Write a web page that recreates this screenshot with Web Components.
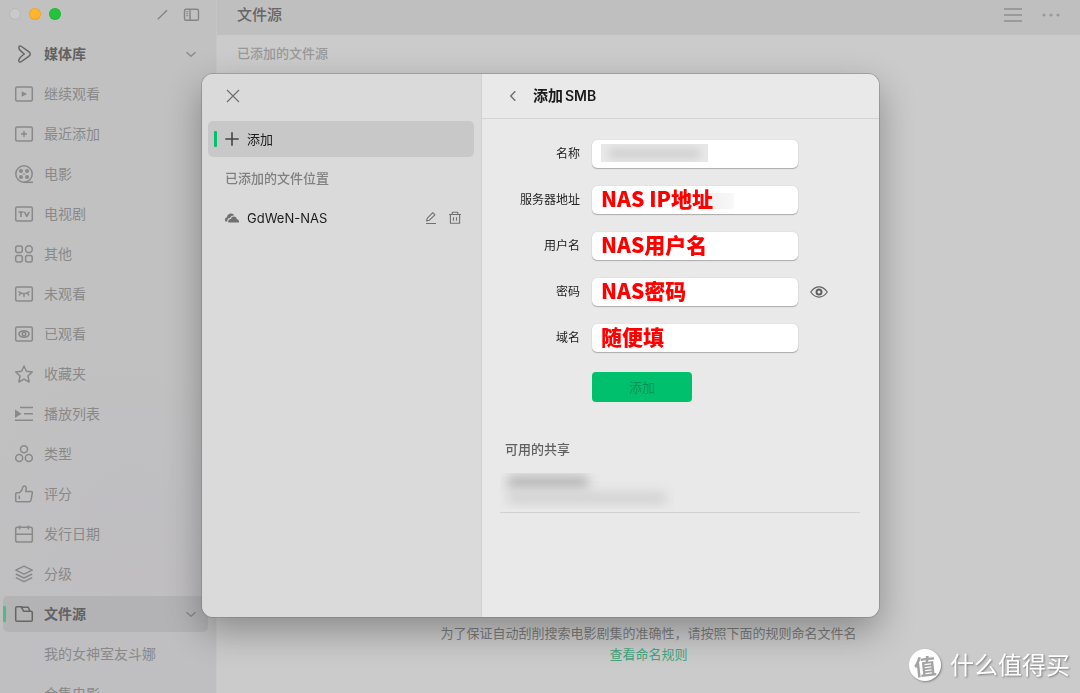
<!DOCTYPE html>
<html lang="zh-CN">
<head>
<meta charset="utf-8">
<title>文件源</title>
<style>
  html, body { margin: 0; height: 100%; }
  body { overflow: hidden; font-family: Inter, "Noto Sans CJK SC", sans-serif; font-size: 13px; color: #8d8d8d; background: #cbcbcb; }
</style>
</head>
<body>
<media-app></media-app>
<script>
const ICONS = {
  library: '<path d="M4.300 1.200Q5.200.5 6.500 1.500L14 6.800Q16.500 9 14 11.200L6.500 16.500Q5.200 17.500 4.300 16.800 3.500 16 4 14.500 4.600 12.600 9.300 9 4.600 5.400 4 3.500 3.500 2 4.300 1.200Z"/>',
  play: '<rect x=".7" y="2" width="16.600" height="14" rx="1.500"/><path d="M6.700 6.200v5.600L12 9z" fill="currentColor" stroke="none"/>',
  plusbox: '<rect x=".7" y="2" width="16.600" height="14" rx="1.500"/><path d="M9 6v6M6 9h6"/>',
  film: '<circle cx="9" cy="9" r="8.200"/><path d="M9 17.300h9"/><g fill="currentColor" stroke="none"><circle cx="6" cy="6" r="2"/><circle cx="12" cy="6" r="2"/><circle cx="6" cy="12" r="2"/><circle cx="12" cy="12" r="2"/><circle cx="9" cy="9" r=".8"/></g>',
  tv: '<rect x=".7" y="2" width="16.600" height="14" rx="1.500"/><path d="M3.500 7h5M6 7v5M9.500 6.800 11.800 11.500 14.200 6.800" stroke-width="1.600"/>',
  other: '<rect x=".7" y=".9" width="6.600" height="6.600" rx="2"/><circle cx="13.900" cy="4.200" r="3.400"/><rect x=".7" y="10.500" width="6.600" height="6.600" rx="2"/><rect x="10.600" y="10.500" width="6.600" height="6.600" rx="2"/>',
  closedeye: '<rect x=".7" y="2" width="16.600" height="14" rx="1.500"/><path d="M3.500 6.500Q9 11 14.500 6.500M9 9v3M5.500 8.200 4.200 10.500M12.500 8.200l1.300 2.300"/>',
  openeye: '<rect x=".7" y="2" width="16.600" height="14" rx="1.500"/><ellipse cx="9" cy="9" rx="5" ry="3.200" stroke-width="1.700"/><circle cx="9" cy="9" r="1.800"/>',
  star: '<path d="M9 1 11.400 6.200 17.300 6.900 13 11 14.100 17 9 14.100 3.900 17 5 11 .7 6.900 6.600 6.200z"/>',
  list: '<path d="M5 2.500h13M9 8.800h9M0 15.200h18"/><path d="M0 4.500v8.400L6.500 8.800z" fill="currentColor" stroke="none"/>',
  types: '<circle cx="9" cy="4.300" r="3.500"/><circle cx="4.200" cy="13" r="3.500"/><circle cx="13.800" cy="13" r="3.500"/>',
  thumb: '<path d="M.7 9Q.7 7.700 2 7.700H4.500Q7 6 7.700 2.500 8.200.8 9.700 1 11.300 1.300 11.200 3.300L10.800 6.500H16Q17.600 6.700 17.300 8.200L16 15Q15.600 16.800 14 16.800H2Q.7 16.800.7 15.500zM4.300 10.500v3.500"/>',
  calendar: '<rect x=".7" y="2.200" width="16.600" height="14.800" rx="1.800"/><path d="M.7 9.300h16.600M4.700.4v4M13.300.4v4"/>',
  layers: '<path d="M9 1.200 17.200 5.200 9 9.200.8 5.200zM.8 9 9 13l8.200-4M.8 12.700 9 16.700l8.200-4"/>',
  folder: '<path d="M.7 3Q.7 1.800 2 1.800H6.200L8 2.300H13.200L15 6.300H16Q17.300 6.300 17.300 7.500V15Q17.300 16.300 16 16.300H2Q.7 16.300.7 15zM6.200 1.800 8.700 6.300H15"/>',
  chevron: '<path d="M4.500 7.300 9 11.300l4.500-4" stroke-width="1.500"/>',
  wand: '<path d="M4.800 14.300 14 5.300M12.300 7l1.700-1.700" stroke-width="1.400"/>',
  panel: '<rect x="2.500" y="4.200" width="14" height="11" rx="1.500"/><path d="M8 4.500v10.500"/><path d="M4.300 6.700h2M4.300 8.700h2M4.300 10.700h2" stroke-width="1"/>',
  menu: '<path d="M0 3h18M0 9h18M0 15h18" stroke-width="2"/>',
  more: '<g fill="currentColor" stroke="none"><circle cx="2" cy="9" r="1.600"/><circle cx="9" cy="9" r="1.600"/><circle cx="16" cy="9" r="1.600"/></g>',
  close: '<path d="M3 3l12 12M15 3 3 15"/>',
  plus: '<path d="M9 2.300v13.400M2.300 9h13.400" stroke-width="1.600"/>',
  cloud: '<g fill="currentColor" stroke="none"><path d="M2.300 12.400Q1 9.200 4 8.300 4.300 5 7.500 4.600 10.300 4.300 11.300 6.600 8 6.300 7 9 4.300 9 4.200 12.400z"/><path d="M5.300 13.500Q4.700 10.300 7.900 10 8.500 7.300 11.300 7.600 13.700 8 13.900 10.200 16.300 10.400 16 13.500z"/></g>',
  edit: '<path d="M4 14.500h10M4.600 11.900 5.200 9.400 10.800 3.700 12.900 5.800 7.200 11.300z" stroke-width="1.100"/>',
  trash: '<path d="M3 5.500h12M6.200 5.500V3.200h5.600v2.300M4.400 5.500v8.800h9.200V5.500M7.500 8.300v3.500M10.500 8.300v3.500" stroke-width="1.100"/>',
  back: '<path d="M11.300 4.300 6.700 9l4.600 4.700" stroke-width="1.500"/>',
  eye: '<path d="M.7 9Q4.500 3.900 9 3.900T17.300 9Q13.500 14.100 9 14.100T.7 9z"/><circle cx="9" cy="9" r="2.500" stroke-width="2"/>'
};

const define = (tag, markup) => customElements.define(tag, class extends HTMLElement {
  constructor() {
    super();
    this.attachShadow({ mode: 'open' });
  }
  connectedCallback() {
    const template = document.createElement('template');
    template.innerHTML = typeof markup === 'function' ? markup(this) : markup;
    this.shadowRoot.replaceChildren(template.content.cloneNode(true));
  }
});

define('ui-icon', el => `
  <style>
    :host { display: block; flex: none; width: 18px; height: 18px; }
    svg { display: block; overflow: visible; stroke-width: var(--icon-stroke, 1.200); }
  </style>
  <svg width="18" height="18" viewBox="0 0 18 18" fill="none" stroke="currentColor" stroke-linejoin="round" aria-hidden="true">${ICONS[el.getAttribute('name')]}</svg>`);

define('icon-button', el => `
  <style>
    :host { display: block; flex: none; }
    button { display: block; margin: 0; padding: 0; border: 0; background: none; color: inherit; }
  </style>
  <button type="button" aria-label="${el.getAttribute('label')}"><ui-icon name="${el.getAttribute('icon')}"></ui-icon></button>`);

define('nav-item', el => `
  <style>
    :host { display: block; --icon-stroke: 1.500; }
    a { display: flex; align-items: center; gap: 11px; height: 36px; padding: 0 8px 0 12px; border-radius: 5px; box-sizing: border-box; color: #898989; font-size: 14px; text-decoration: none; position: relative; }
    .label { flex: 1; white-space: nowrap; padding-bottom: 2px; }
    .blank { width: 18px; }
    :host([strong]) .label { color: #626262; font-weight: 700; }
    :host([strong]) a > ui-icon:first-child { color: #666; }
    :host([selected]) a { background: rgba(70, 70, 70, .09); }
    :host([selected]) a::before { content: ""; position: absolute; left: 0; top: 10px; width: 3px; height: 16px; border-radius: 1px; background: #55b58d; }
  </style>
  <a href="#">
    ${el.hasAttribute('icon') ? `<ui-icon name="${el.getAttribute('icon')}"></ui-icon>` : '<span class="blank"></span>'}
    <span class="label"><slot></slot></span>
    ${el.hasAttribute('strong') ? '<ui-icon name="chevron"></ui-icon>' : ''}
  </a>`);

define('side-bar', `
  <style>
    :host { display: flex; flex-direction: column; overflow: hidden; box-sizing: border-box; border-right: 1px solid #c6c6c6;
      background: radial-gradient(circle at 130px 510px, rgba(188,184,194,.4), rgba(190,182,196,0) 150px), linear-gradient(#c1c1c1 70%, #bfbec0); }
    header { display: flex; align-items: center; gap: 8px; height: 28px; padding: 0 16px 0 9px; margin-bottom: 8px; flex: none; color: #858585; }
    i { width: 12px; height: 12px; border-radius: 50%; background: #c9c9c9; box-shadow: inset 0 0 0 1px rgba(0,0,0,.08); }
    .min { background: #ffb42b; }
    .max { background: #23c43b; }
    .tools { display: flex; gap: 11px; margin-left: auto; --icon-stroke: 1.400; }
    nav { display: flex; flex-direction: column; gap: 4px; padding: 0 8px 0 3px; }
  </style>
  <header>
    <i></i><i class="min"></i><i class="max"></i>
    <div class="tools"><icon-button icon="wand" label="整理"></icon-button><icon-button icon="panel" label="侧边栏"></icon-button></div>
  </header>
  <nav>
    <nav-item icon="library" strong>媒体库</nav-item>
    <nav-item icon="play">继续观看</nav-item>
    <nav-item icon="plusbox">最近添加</nav-item>
    <nav-item icon="film">电影</nav-item>
    <nav-item icon="tv">电视剧</nav-item>
    <nav-item icon="other">其他</nav-item>
    <nav-item icon="closedeye">未观看</nav-item>
    <nav-item icon="openeye">已观看</nav-item>
    <nav-item icon="star">收藏夹</nav-item>
    <nav-item icon="list">播放列表</nav-item>
    <nav-item icon="types">类型</nav-item>
    <nav-item icon="thumb">评分</nav-item>
    <nav-item icon="calendar">发行日期</nav-item>
    <nav-item icon="layers">分级</nav-item>
    <nav-item icon="folder" strong selected>文件源</nav-item>
    <nav-item>我的女神室友斗娜</nav-item>
    <nav-item>合集电影</nav-item>
  </nav>`);

define('source-page', `
  <style>
    :host { display: flex; flex-direction: column; background: #cbcbcb; }
    header { display: flex; align-items: center; gap: 20px; height: 35px; padding: 0 20px; background: #bfbfbf; color: #9a9a9a; }
    h1 { flex: 1; margin: 0; font-size: 15px; line-height: 22px; font-weight: 500; color: #666; padding-bottom: 6px; }
    .tools { display: flex; gap: 20px; padding-bottom: 6px; }
    h2 { margin: 7px 20px; font-size: 13px; line-height: 22px; font-weight: 500; color: #999; }
    footer { margin-top: auto; padding: 0 0 28px; text-align: center; line-height: 21px; color: #7c7c7c; }
    p { margin: 0; }
    a { color: #43a57e; text-decoration: none; }
  </style>
  <header>
    <h1>文件源</h1>
    <div class="tools"><icon-button icon="menu" label="列表"></icon-button><icon-button icon="more" label="更多"></icon-button></div>
  </header>
  <h2>已添加的文件源</h2>
  <footer>
    <p>为了保证自动刮削搜索电影剧集的准确性，请按照下面的规则命名文件名</p>
    <p><a href="#">查看命名规则</a></p>
  </footer>`);

define('location-list', `
  <style>
    :host { display: block; background: #dadada; color: #707070; padding: 13px 7px 13px 6px; border-right: 1px solid #d2d2d2; box-sizing: border-box; }
    .close { display: flex; padding: 0 16px; margin-bottom: 16px; }
    .add { display: flex; align-items: center; gap: 6px; width: 100%; height: 36px; margin: 0; padding: 0 15px; border: 0; border-radius: 5px; background: #c8c8c8; font: inherit; font-size: 13px; color: #1c1c1c; position: relative; text-align: left; }
    .add span { padding-bottom: 2px; }
    .add ui-icon { color: #444; }
    .add::before { content: ""; position: absolute; left: 6px; top: 10px; width: 3px; height: 16px; border-radius: 1px; background: #00c16e; }
    h2 { margin: 11px 17px 14px; font-size: 13px; line-height: 20px; font-weight: 500; color: #808080; }
    .row { display: flex; align-items: center; gap: 6px; height: 32px; padding: 0 10px 0 15px; }
    .row > span { flex: 1; color: #1c1c1c; }
  </style>
  <div class="close"><icon-button icon="close" label="关闭"></icon-button></div>
  <button class="add" type="button"><ui-icon name="plus"></ui-icon><span>添加</span></button>
  <h2>已添加的文件位置</h2>
  <div class="row"><ui-icon name="cloud"></ui-icon><span>GdWeN-NAS</span><icon-button icon="edit" label="编辑"></icon-button><icon-button icon="trash" label="删除"></icon-button></div>`);

define('form-field', el => `
  <style>
    :host { display: grid; grid-template-columns: 80px 206px 18px; align-items: center; column-gap: 12px; }
    label { text-align: right; font-size: 12px; line-height: 18px; color: #222; white-space: nowrap; }
    .box { position: relative; }
    input { display: block; width: 100%; height: 28px; box-sizing: border-box; margin: 0; padding: 0 9px 5px; border: 0; border-radius: 5px; background: #fff; box-shadow: 0 1px 1px rgba(0,0,0,.25), 0 0 1px rgba(0,0,0,.2);
      font: 900 21px/23px "Noto Sans CJK SC", sans-serif; color: #ff0000; outline: none; }
    :host([smudged]) input { background: linear-gradient(90deg, #eee, #f8f8f8) 112px 7px / 30px 16px no-repeat #fff; }
    icon-button { color: #606060; }
    slot { display: block; }
  </style>
  <label for="value">${el.getAttribute('label')}</label>
  <div class="box"><input id="value" type="text" value="${el.getAttribute('value') || ''}"><slot></slot></div>
  ${el.hasAttribute('reveal') ? '<icon-button icon="eye" label="显示密码"></icon-button>' : ''}`);

/* Obscured private value: a soft grey smudge clipped to its own box. */
define('private-value', `
  <style>
    :host { display: block; overflow: hidden; position: absolute; left: 9px; top: 4px; width: 107px; height: 18px; background: #e9e9e9; }
    i { display: block; margin: 5px 8px; height: 9px; background: #ccc; filter: blur(5px); }
  </style>
  <i></i>`);

define('share-item', `
  <style>
    :host { display: block; height: 39px; border-bottom: 1px solid #d2d2d2; }
    div { overflow: hidden; height: 36px; width: 174px; }
    i { display: block; background: #aaa; filter: blur(6px); width: 80px; height: 10px; margin: 4px 8px 6px; }
    i + i { background: #cdcdcd; width: 158px; height: 10px; margin: 0 8px; }
  </style>
  <div><i></i><i></i></div>`);

define('smb-form', `
  <style>
    :host { display: block; background: #e9e9e9; }
    header { display: flex; align-items: center; gap: 11px; height: 44px; padding: 0 22px; border-bottom: 1px solid #d3d3d3; color: #707070; }
    h1 { margin: 0; font-size: 15px; line-height: 22px; font-weight: 600; color: #191919; }
    h1 span { font-size: 14px; margin-left: 2px; }
    form { display: flex; flex-direction: column; gap: 18px; padding: 21px 18px 0; }
    .submit { align-self: flex-start; margin: 2px 0 0 92px; width: 100px; height: 30px; padding: 0 0 2px; border: 0; border-radius: 4px; background: #00c06e; color: #069257; font: inherit; font-size: 13px; }
    section { padding: 37px 19px 0 18px; }
    h2 { margin: 0 5px 14px; font-size: 13px; line-height: 20px; font-weight: 500; color: #606060; }
  </style>
  <header><icon-button icon="back" label="返回"></icon-button><h1>添加<span>SMB</span></h1></header>
  <form>
    <form-field label="名称"><private-value></private-value></form-field>
    <form-field label="服务器地址" value="NAS IP地址" smudged></form-field>
    <form-field label="用户名" value="NAS用户名"></form-field>
    <form-field label="密码" value="NAS密码" reveal></form-field>
    <form-field label="域名" value="随便填"></form-field>
    <button class="submit" type="button">添加</button>
  </form>
  <section><h2>可用的共享</h2><share-item></share-item></section>`);

define('modal-panel', `
  <style>
    :host { position: fixed; inset: 0; display: flex; box-sizing: border-box; padding: 74px 201px 76px 202px; }
    .panel { flex: 1; display: grid; grid-template-columns: 280px 1fr; overflow: hidden; border-radius: 11px; }
    .shade { flex: 1; display: flex; border-radius: 11px; box-shadow: 0 0 0 1px rgba(120,120,120,.45), 0 14px 36px rgba(0,0,0,.32); }
  </style>
  <div class="shade"><div class="panel" role="dialog" aria-label="添加SMB"><location-list></location-list><smb-form></smb-form></div></div>`);

define('site-mark', `
  <style>
    :host { position: fixed; right: 10px; bottom: 10px; display: flex; align-items: center; gap: 9px; color: #fff; font-family: "Noto Sans CJK SC", sans-serif; font-size: 24px; line-height: 34px; text-shadow: 1px 1px 2px rgba(0,0,0,.4); }
    b { width: 32px; height: 32px; border-radius: 50%; background: #fff; color: #a3a3a3; font-size: 22px; line-height: 32px; text-align: center; text-shadow: none; box-shadow: 1px 1px 2px rgba(0,0,0,.35); }
    b span { display: block; transform: rotate(-6deg); }
    .name { padding-bottom: 2px; }
  </style>
  <b><span>值</span></b><span class="name">什么值得买</span>`);

define('media-app', `
  <style>
    :host { display: grid; grid-template-columns: 217px 1fr; grid-template-rows: 100vh; }
  </style>
  <side-bar></side-bar>
  <source-page></source-page>
  <modal-panel></modal-panel>
  <site-mark></site-mark>`);
</script>
</body>
</html>
